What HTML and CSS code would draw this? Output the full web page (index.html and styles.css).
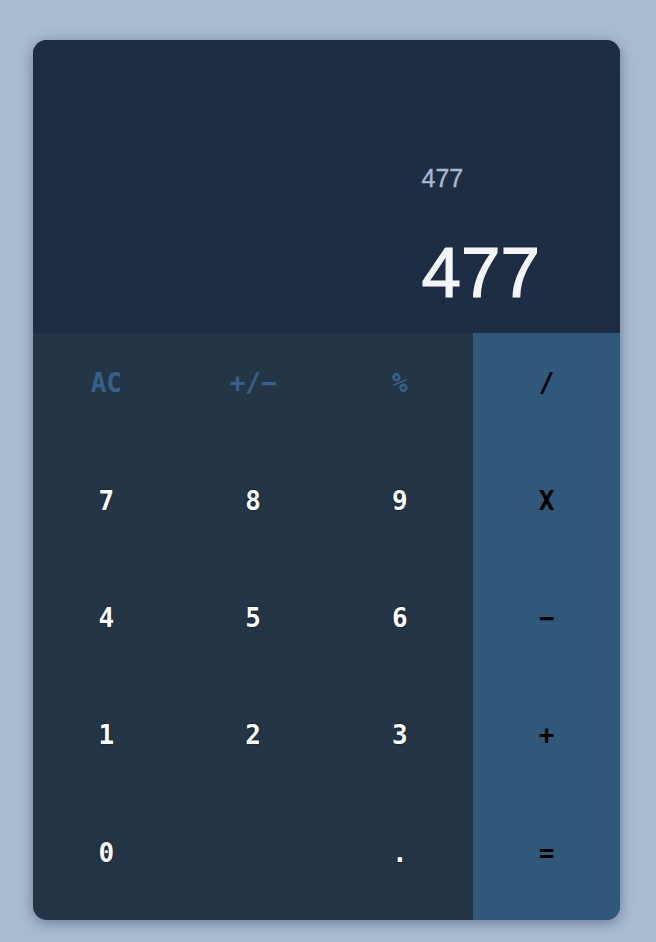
FILE: index.html
```html
<!DOCTYPE html>
<html lang="en">
<head>
<meta charset="utf-8">
<title>Calculator</title>
<link rel="stylesheet" href="styles.css">
</head>
<body>
<div class="page">
  <div class="calculator">
    <div class="display">
      <div class="readout">
        <div class="previous">477</div>
        <div class="current">477</div>
      </div>
    </div>
    <div class="keypad">
      <button class="key fn">AC</button>
      <button class="key fn">+/−</button>
      <button class="key fn">%</button>
      <button class="key op">/</button>
      <button class="key num">7</button>
      <button class="key num">8</button>
      <button class="key num">9</button>
      <button class="key op">X</button>
      <button class="key num">4</button>
      <button class="key num">5</button>
      <button class="key num">6</button>
      <button class="key op">−</button>
      <button class="key num">1</button>
      <button class="key num">2</button>
      <button class="key num">3</button>
      <button class="key op">+</button>
      <button class="key num">0</button>
      <button class="key num blank"></button>
      <button class="key num">.</button>
      <button class="key op">=</button>
    </div>
  </div>
</div>
</body>
</html>
```

FILE: styles.css
```css
html, body {
  margin: 0;
  padding: 0;
}
body {
  background: #a9bcd2;
  width: 656px;
  height: 942px;
  overflow: hidden;
  font-family: "Liberation Sans", Arial, sans-serif;
}
.page {
  padding: 40px 36px 0 33px;
}
.calculator {
  width: 587px;
  height: 880px;
  border-radius: 14px;
  overflow: hidden;
  background: #243546;
  box-shadow: 0 3px 14px rgba(30, 45, 70, 0.45);
  display: flex;
  flex-direction: column;
}
.display {
  height: 293px;
  background: #1d2d44;
  display: flex;
  justify-content: flex-end;
  align-items: flex-start;
  padding-right: 80px;
  box-sizing: border-box;
}
.readout {
  padding-top: 123px;
  text-align: left;
}
.previous {
  color: #a7b9cf;
  font-size: 25px;
  line-height: 30px;
  height: 30px;
  -webkit-text-stroke: 0.4px #a7b9cf;
}
.current {
  color: #f4f5f7;
  font-size: 71px;
  line-height: 80px;
  margin-top: 40px;
  -webkit-text-stroke: 1.2px #f4f5f7;
  text-shadow: 0 0 2px rgba(0, 0, 0, 0.6);
}
.keypad {
  flex: 1;
  display: grid;
  grid-template-columns: repeat(4, 1fr);
  grid-template-rows: repeat(5, 1fr);
}
.key {
  border: none;
  margin: 0;
  padding: 0 0 17px 0;
  background: transparent;
  font-family: "DejaVu Sans Mono", "Liberation Mono", monospace;
  font-weight: bold;
  font-size: 26px;
  display: flex;
  align-items: center;
  justify-content: center;
}
.fn {
  color: #35628c;
}
.num {
  color: #ffffff;
  text-shadow: 0 0 2px rgba(0, 0, 0, 0.8);
}
.op {
  background: #30587a;
  color: #000000;
}
```
